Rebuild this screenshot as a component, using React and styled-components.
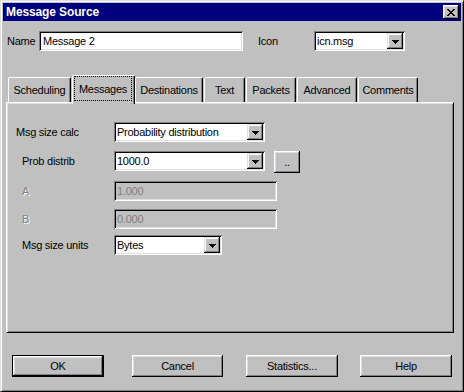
import React from "react";
import styled, { createGlobalStyle } from "styled-components";

const Global = createGlobalStyle`
  html, body { margin: 0; padding: 0; background: #c0c0c0; }
  body {
    font-family: "Liberation Sans", Arial, sans-serif;
    font-size: 11px;
    letter-spacing: -0.25px;
    color: #000;
  }
  * { box-sizing: border-box; }
`;

const Window = styled.div`
  width: 464px;
  height: 392px;
  background: #c0c0c0;
  border: 1px solid;
  border-color: #dfdfdf #000 #000 #dfdfdf;
  box-shadow: inset 1px 1px #fff, inset -1px -1px #808080;
  padding: 2px;
  display: flex;
  flex-direction: column;
`;

const TitleBar = styled.div`
  height: 18px;
  background: #000080;
  display: flex;
  align-items: center;
  justify-content: space-between;
  padding: 0 2px 0 3px;
`;

const Title = styled.span`
  color: #fff;
  font-weight: bold;
  font-size: 12px;
  letter-spacing: -0.12px;
`;

const CloseButton = styled.div`
  width: 16px;
  height: 14px;
  background: #c0c0c0;
  box-shadow: inset -1px -1px #000, inset 1px 1px #fff, inset -2px -2px #808080,
    inset 2px 2px #dfdfdf;
  display: flex;
  align-items: center;
  justify-content: center;
  padding-right: 1px;
`;

const NameRow = styled.div`
  margin-top: 10px;
  padding-left: 4px;
  height: 20px;
  display: flex;
  align-items: center;
`;

const Label = styled.span`
  width: ${(p) => p.$width || 0}px;
  margin-left: ${(p) => p.$ml || 0}px;
  padding-left: ${(p) => (p.$indent ? 6 : 0)}px;
  line-height: 20px;
  flex: none;
  white-space: nowrap;
  color: ${(p) => (p.$disabled ? "#808080" : "#000")};
  text-shadow: ${(p) => (p.$disabled ? "1px 1px #fff" : "none")};
`;

const Field = styled.div`
  width: ${(p) => p.$width}px;
  height: 20px;
  flex: none;
  background: ${(p) => (p.$disabled ? "#c0c0c0" : "#fff")};
  color: ${(p) => (p.$disabled ? "#808080" : "#000")};
  box-shadow: inset 1px 1px #808080, inset -1px -1px #fff, inset 2px 2px #000,
    inset -2px -2px #dfdfdf;
  padding: 0 2px 0 ${(p) => p.$pad || 3}px;
  display: flex;
  align-items: center;
  white-space: nowrap;
  overflow: hidden;
`;

const FieldText = styled.span`
  flex: 1;
  line-height: 16px;
`;

const DropButton = styled.div`
  width: 16px;
  height: 16px;
  flex: none;
  background: #c0c0c0;
  box-shadow: inset -1px -1px #000, inset 1px 1px #dfdfdf, inset -2px -2px #808080,
    inset 2px 2px #fff;
  display: flex;
  align-items: center;
  justify-content: center;
  padding-top: 1px;
`;

const TabsArea = styled.div`
  margin: 24px 7px 0 3px;
  display: flex;
  flex-direction: column;
`;

const TabStrip = styled.div`
  height: 27px;
  display: flex;
  align-items: flex-end;
  padding-left: 2px;
`;

const Tab = styled.div`
  width: ${(p) => p.$w}px;
  height: ${(p) => (p.$active ? 29 : 25)}px;
  margin-right: ${(p) => (p.$active ? 0 : 1)}px;
  margin-bottom: ${(p) => (p.$active ? -2 : 0)}px;
  position: ${(p) => (p.$active ? "relative" : "static")};
  z-index: ${(p) => (p.$active ? 1 : "auto")};
  flex: none;
  background: #c0c0c0;
  border-style: solid;
  border-width: 1px 1px 0 1px;
  border-color: #fff #000 transparent #fff;
  border-radius: 2px 2px 0 0;
  box-shadow: inset -1px 0 #808080;
  display: flex;
  padding: ${(p) => (p.$active ? "0 2px 3px 1px" : "0")};
`;

const TabLabel = styled.span`
  flex: 1;
  display: flex;
  align-items: center;
  justify-content: center;
  white-space: nowrap;
  border: 1px dotted ${(p) => (p.$focus ? "#000" : "transparent")};
`;

const Panel = styled.div`
  height: 231px;
  background: #c0c0c0;
  border: 1px solid;
  border-color: #fff #000 #000 #fff;
  box-shadow: inset 1px 1px #dfdfdf, inset -1px -1px #808080;
  padding: 19px 9px 0 9px;
  display: flex;
  flex-direction: column;
`;

const Row = styled.div`
  display: flex;
  align-items: flex-start;
  margin-top: ${(p) => p.$mt || 0}px;
`;

const Button = styled.button`
  width: ${(p) => p.$w}px;
  height: 22px;
  margin-left: ${(p) => p.$ml || 0}px;
  flex: none;
  padding: 0;
  background: #c0c0c0;
  font: inherit;
  letter-spacing: inherit;
  color: #000;
  border: ${(p) => (p.$default ? "1px solid #000" : "none")};
  box-shadow: inset -1px -1px #000, inset 1px 1px #fff, inset -2px -2px #808080,
    inset 2px 2px #dfdfdf;
  display: flex;
  align-items: center;
  justify-content: center;
`;

const Footer = styled.div`
  margin-top: 22px;
  padding-left: 9px;
  display: flex;
`;

const CloseGlyph = () => {
  const rows = [
    [0, 6],
    [1, 5],
    [2, 4],
    [3, 3],
    [2, 4],
    [1, 5],
    [0, 6],
  ];
  return (
    <svg width="8" height="7" viewBox="0 0 8 7" shapeRendering="crispEdges">
      {rows.map(([a, b], y) => (
        <React.Fragment key={y}>
          <rect x={a} y={y} width="2" height="1" fill="#000" />
          <rect x={b} y={y} width="2" height="1" fill="#000" />
        </React.Fragment>
      ))}
    </svg>
  );
};

const Arrow = () => (
  <svg width="7" height="4" viewBox="0 0 7 4" shapeRendering="crispEdges">
    <rect x="0" y="0" width="7" height="1" fill="#000" />
    <rect x="1" y="1" width="5" height="1" fill="#000" />
    <rect x="2" y="2" width="3" height="1" fill="#000" />
    <rect x="3" y="3" width="1" height="1" fill="#000" />
  </svg>
);

const Combo = ({ width, value }) => (
  <Field $width={width}>
    <FieldText>{value}</FieldText>
    <DropButton>
      <Arrow />
    </DropButton>
  </Field>
);

const tabs = [
  { label: "Scheduling", w: 63 },
  { label: "Messages", w: 63, active: true },
  { label: "Destinations", w: 68 },
  { label: "Text", w: 41 },
  { label: "Packets", w: 50 },
  { label: "Advanced", w: 60 },
  { label: "Comments", w: 60 },
];

export default function App() {
  return (
    <>
      <Global />
      <Window>
        <TitleBar>
          <Title>Message Source</Title>
          <CloseButton>
            <CloseGlyph />
          </CloseButton>
        </TitleBar>

        <NameRow>
          <Label $width={32}>Name</Label>
          <Field $width={204} $pad={4}>
            <FieldText>Message 2</FieldText>
          </Field>
          <Label $width={56} $ml={15}>
            Icon
          </Label>
          <Combo width={91} value="icn.msg" />
        </NameRow>

        <TabsArea>
          <TabStrip>
            {tabs.map((t) => (
              <Tab key={t.label} $w={t.w} $active={t.active}>
                <TabLabel $focus={t.active}>{t.label}</TabLabel>
              </Tab>
            ))}
          </TabStrip>
          <Panel>
            <Row>
              <Label $width={98}>Msg size calc</Label>
              <Combo width={151} value="Probability distribution" />
            </Row>
            <Row $mt={9}>
              <Label $width={98} $indent>
                Prob distrib
              </Label>
              <Combo width={151} value="1000.0" />
              <Button $w={26} $ml={9}>
                ..
              </Button>
            </Row>
            <Row $mt={8}>
              <Label $width={98} $indent $disabled>
                A
              </Label>
              <Field $width={163} $disabled>
                <FieldText>1.000</FieldText>
              </Field>
            </Row>
            <Row $mt={8}>
              <Label $width={98} $indent $disabled>
                B
              </Label>
              <Field $width={163} $disabled>
                <FieldText>0.000</FieldText>
              </Field>
            </Row>
            <Row $mt={6}>
              <Label $width={98} $indent>
                Msg size units
              </Label>
              <Combo width={108} value="Bytes" />
            </Row>
          </Panel>
        </TabsArea>

        <Footer>
          <Button $w={92} $default>
            OK
          </Button>
          <Button $w={91} $ml={28}>
            Cancel
          </Button>
          <Button $w={92} $ml={23}>
            Statistics...
          </Button>
          <Button $w={92} $ml={22}>
            Help
          </Button>
        </Footer>
      </Window>
    </>
  );
}
